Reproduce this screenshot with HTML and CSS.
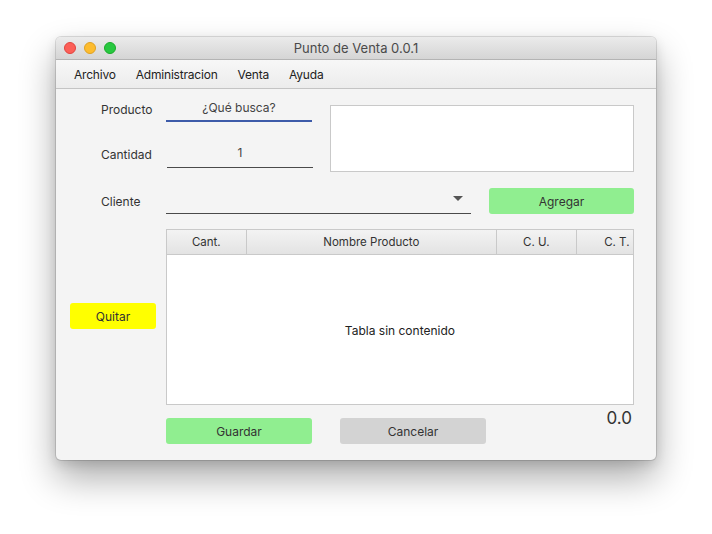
FILE: index.html
```html
<!DOCTYPE html>
<html lang="es">
<head>
<meta charset="utf-8">
<title>Punto de Venta 0.0.1</title>
<link rel="stylesheet" href="styles.css">
</head>
<body>
<div class="window">
  <div class="titlebar">
    <div class="lights">
      <span class="light red"></span>
      <span class="light yellow"></span>
      <span class="light green"></span>
    </div>
    <div class="title">Punto de Venta 0.0.1</div>
  </div>
  <div class="menubar">
    <span class="menu">Archivo</span>
    <span class="menu">Administracion</span>
    <span class="menu">Venta</span>
    <span class="menu">Ayuda</span>
  </div>
  <div class="content">
    <div class="top">
      <div class="fields">
        <div class="row row-producto">
          <div class="label">Producto</div>
          <div class="field focused"><span class="placeholder">¿Qué busca?</span></div>
        </div>
        <div class="row row-cantidad">
          <div class="label">Cantidad</div>
          <div class="field plain"><span class="value">1</span></div>
        </div>
      </div>
      <div class="textarea"></div>
    </div>
    <div class="row row-cliente">
      <div class="label">Cliente</div>
      <div class="combo"><span class="arrow"></span></div>
      <div class="btn btn-green btn-agregar">Agregar</div>
    </div>
    <div class="row row-table">
      <div class="side"><div class="btn btn-yellow">Quitar</div></div>
      <div class="table">
        <div class="thead">
          <div class="th c1">Cant.</div>
          <div class="th c2">Nombre Producto</div>
          <div class="th c3">C. U.</div>
          <div class="th c4">C. T.</div>
        </div>
        <div class="tbody">Tabla sin contenido</div>
      </div>
    </div>
    <div class="row row-bottom">
      <div class="btn btn-green btn-wide">Guardar</div>
      <div class="btn btn-gray btn-wide">Cancelar</div>
      <div class="total">0.0</div>
    </div>
  </div>
</div>
</body>
</html>
```
FILE: styles.css
```css
* { box-sizing: border-box; }
html, body { margin: 0; padding: 0; background: #ffffff; }
body {
  width: 712px;
  height: 534px;
  padding: 37px 0 0 56px;
  font-family: "Inter", "Liberation Sans", sans-serif;
  color: #333;
  overflow: hidden;
}
.window {
  width: 600px;
  height: 423px;
  background: #f4f4f4;
  border-radius: 5px;
  box-shadow: 0 0 0 1px rgba(0,0,0,0.12), 0 18px 36px rgba(0,0,0,0.33), 0 4px 12px rgba(0,0,0,0.12);
  overflow: hidden;
  display: flex;
  flex-direction: column;
}
.titlebar {
  height: 23px;
  flex: none;
  background: linear-gradient(#ebebeb, #d5d5d5);
  border-bottom: 1px solid #b4b4b4;
  display: flex;
  align-items: center;
  position: relative;
}
.lights { display: flex; gap: 8px; padding-left: 8px; }
.light { width: 12px; height: 12px; border-radius: 50%; display: block; }
.red { background: #fc5f57; border: 0.5px solid #e0443e; }
.yellow { background: #fdbc2e; border: 0.5px solid #dea123; }
.green { background: #28c840; border: 0.5px solid #1aab29; }
.title {
  position: absolute;
  left: 0; right: 0; top: 0; bottom: 0;
  text-align: center;
  line-height: 23px;
  font-size: 13px;
  color: #4a4a4a;
  pointer-events: none;
}
.menubar {
  height: 29px;
  flex: none;
  background: linear-gradient(#f7f7f7, #ececec);
  border-bottom: 1px solid #c4c4c4;
  display: flex;
  align-items: center;
  padding-left: 8px;
  font-size: 12px;
  letter-spacing: -0.2px;
  color: #222;
}
.menu { padding: 0 10px; }
.content {
  flex: 1;
  padding: 7px 22px 0 14px;
  display: flex;
  flex-direction: column;
}
.row { display: flex; align-items: center; }
.label {
  width: 96px;
  padding-left: 31px;
  font-size: 12px;
  color: #333;
}
.top { display: flex; }
.fields { display: flex; flex-direction: column; }
.field {
  width: 146px;
  height: 26px;
  display: flex;
  align-items: center;
  justify-content: center;
  font-size: 12px;
  color: #444;
}
.focused { border-bottom: 2px solid #3d5ba9; }
.plain { border-bottom: 1px solid #4a4a4a; margin-left: 1px; }
.row-producto { height: 26px; }
.row-producto .field { height: 26px; padding-bottom: 2px; }
.row-cantidad { margin-top: 19px; }
.row-cantidad .field { height: 27px; padding-bottom: 3px; }
.placeholder { color: #444; }
.textarea {
  margin-left: 17px;
  margin-top: 9px;
  width: 306px;
  height: 67px;
  background: #fff;
  border: 1px solid #c9c9c9;
}
.row-cliente { margin-top: 16px; height: 26px; }
.combo {
  width: 305px;
  height: 25px;
  border-bottom: 1px solid #4a4a4a;
  position: relative;
}
.arrow {
  position: absolute;
  right: 8px;
  top: 7px;
  width: 0; height: 0;
  border-left: 5px solid transparent;
  border-right: 5px solid transparent;
  border-top: 5px solid #555;
}
.btn {
  height: 26px;
  border-radius: 3px;
  display: flex;
  align-items: center;
  justify-content: center;
  font-size: 12px;
  color: #333;
}
.btn-green { background: #90ee90; }
.btn-yellow { background: #ffff00; width: 86px; }
.btn-gray { background: #d3d3d3; }
.btn-agregar { width: 145px; margin-left: 18px; }
.row-table { margin-top: 15px; align-items: center; }
.side { width: 96px; display: flex; padding-bottom: 2px; }
.table {
  width: 469px;
  height: 176px;
  background: #fff;
  border: 1px solid #c9c9c9;
  display: flex;
  flex-direction: column;
  overflow: hidden;
}
.thead {
  height: 25px;
  flex: none;
  display: flex;
  background: linear-gradient(#f3f3f3, #e3e3e3);
  border-bottom: 1px solid #c9c9c9;
  font-size: 11.5px;
  color: #333;
}
.th {
  flex: none;
  display: flex;
  align-items: center;
  justify-content: center;
  border-right: 1px solid #c9c9c9;
}
.c1 { width: 80px; }
.c2 { width: 250px; }
.c3 { width: 80px; }
.c4 { width: 80px; border-right: none; }
.tbody {
  flex: 1;
  display: flex;
  align-items: center;
  justify-content: center;
  font-size: 12px;
  color: #222;
  padding-top: 1px;
}
.row-bottom { margin-top: 13px; padding-left: 96px; align-items: flex-start; }
.btn-wide { width: 146px; }
.btn-gray { margin-left: 28px; }
.total {
  margin-left: auto;
  margin-right: 2px;
  margin-top: -10px;
  font-size: 17px;
  color: #333;
}
```
